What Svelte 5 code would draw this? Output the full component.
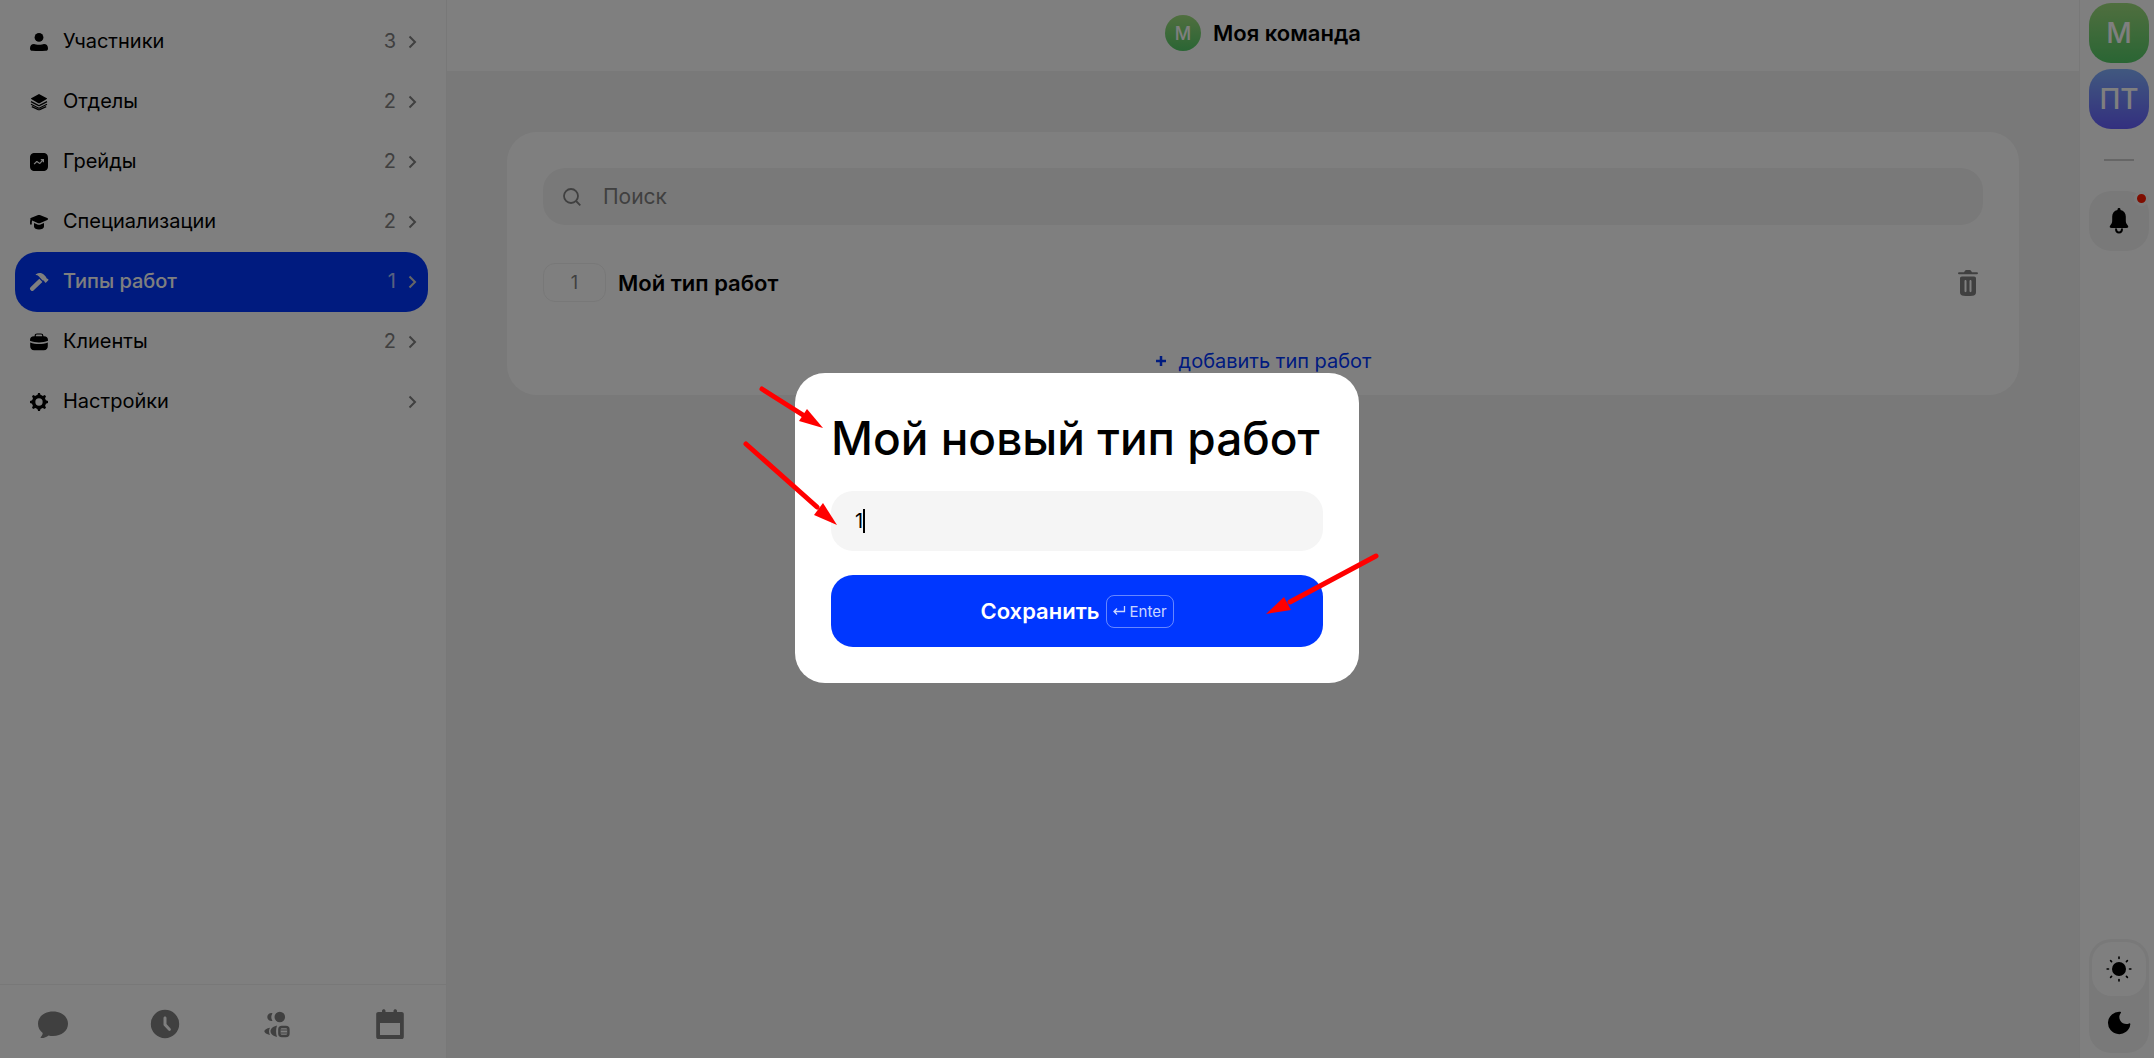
<script>
  const sections = [
    { id: 'people', label: 'Участники', count: 3 },
    { id: 'layers', label: 'Отделы', count: 2 },
    { id: 'grades', label: 'Грейды', count: 2 },
    { id: 'cap', label: 'Специализации', count: 2 },
    { id: 'hammer', label: 'Типы работ', count: 1, active: true },
    { id: 'case', label: 'Клиенты', count: 2 },
    { id: 'gear', label: 'Настройки', count: null }
  ];
  const teeth = [0, 45, 90, 135, 180, 225, 270, 315];

  let query = $state('');
  let workName = $state('Мой новый тип работ');
  let workOrder = $state('1');
  let theme = $state('light');
</script>

{#snippet sectionIcon(id)}
  <svg class="icon" viewBox="0 0 18 18" aria-hidden="true">
    {#if id === 'people'}
      <circle cx="9" cy="4.4" r="4.4" />
      <path d="M0 15.2c0-2.7 1.6-4.2 4-4.2.8 0 1.2.3 2 .5 2 .4 4 .4 6 0 .8-.2 1.200-.5 2-.5 2.400 0 4 1.500 4 4.200 0 1.800-.8 2.500-2.500 2.600-4.300.3-8.700.3-13 0C.8 17.700 0 17 0 15.200z" />
    {:else if id === 'layers'}
      <path d="M9 1l7.800 4.200c.4.2.4.6 0 .8L9.600 10.200c-.4.200-.8.200-1.200 0L1.200 6c-.4-.2-.4-.6 0-.8z" />
      <path class="line" d="M1 8.600l7.300 3.800c.5.2.9.2 1.400 0L17 8.600M1 11.200l7.300 3.800c.5.2.9.2 1.400 0l7.300-3.800M1.800 13.600l6.500 3c.5.200.9.200 1.400 0l6.500-3" />
    {:else if id === 'grades'}
      <path fill-rule="evenodd" d="M5 0h8c3.500 0 5 1.500 5 5v8c0 3.500-1.500 5-5 5H5c-3.500 0-5-1.500-5-5V5c0-3.500 1.500-5 5-5zM10.800 6.100v1.100h1.100l-2.200 2.500-2.100-1.500c-.6-.4-1.200-.3-1.700.2L3.700 10.700l.8.9 2.400-2.400 2.200 1.600c.5.300 1.100.3 1.500-.2l2.200-2.600v1.200H14V6.100z" />
    {:else if id === 'cap'}
      <path d="M7.600 2.200c1-.4 1.800-.4 2.800 0l6.900 2.900c1 .5 1 1.400 0 1.900l-6.900 2.900c-1 .4-1.800.4-2.800 0L2.200 7.600c-.4.900-.5 1.900-.4 3.400 0 .9-1.700.9-1.700 0C0 9 .1 7.500.5 6.300c-.4-.5-.3-.9.2-1.200z" />
      <path d="M4 10l3.400 1.500c1.100.4 2.100.4 3.200 0L14 10v3.600c0 2-2.300 3-5 3s-5-1-5-3z" />
    {:else if id === 'hammer'}
      <path d="M6 1.200C8.600-.4 11.800-.3 14 1.800l2.100 2.100c.3.300.3.700.1 1.100l2 1.300c.4.300.4.700.1 1l-2.200 2.200c-.3.300-.7.300-1 0l-1.400-2c-.5.200-.9.100-1.300-.3L10 4.800C9 3.500 8 2.400 6.100 2.100c-.5-.1-.5-.6-.1-.9z" />
      <path d="M9.300 5.800l3.100 3.100-8.900 8.500c-.8.700-1.800.7-2.500 0l-.6-.6c-.7-.7-.6-1.700.1-2.500z" />
    {:else if id === 'case'}
      <path class="line" d="M5.200 4V2.800C5.200 1.700 6 1 7 1h4c1 0 1.800.7 1.800 1.800V4" />
      <path d="M4 3.200h10c2.600 0 4 1.500 4 4v.6c-5.500 2.200-12.500 2.200-18 0v-.6c0-2.500 1.400-4 4-4z" />
      <path d="M.2 9.500c5.500 2 12.100 2 17.600 0V13c0 2.600-1.300 4.200-4 4.200H4.200c-2.700 0-4-1.600-4-4.200z" />
    {:else}
      <circle class="ring" cx="9" cy="9" r="5.400" />
      {#each teeth as angle}
        <path d="M6.800 3.600L8.100 0h1.800l1.300 3.600z" transform="rotate({angle} 9 9)" />
      {/each}
    {/if}
  </svg>
{/snippet}

<div class="page">
  <aside class="sidebar">
    <nav class="sections" aria-label="Разделы">
      {#each sections as s}
        <a class="section" class:active={s.active} href="#{s.id}">
          {@render sectionIcon(s.id)}
          <span class="label">{s.label}</span>
          {#if s.count !== null}<span class="count">{s.count}</span>{/if}
          <svg class="chevron" viewBox="0 0 8 14" aria-hidden="true"><path d="M1.500 1.500L7 7l-5.500 5.500" /></svg>
        </a>
      {/each}
    </nav>
    <nav class="tabs" aria-label="Навигация">
      <button type="button" aria-label="Чаты">
        <svg viewBox="0 0 36 36"><path d="M18 5.500c8.600 0 15 5.200 15 12.200s-6.400 12.300-15 12.300c-1.600 0-3.100-.2-4.500-.6-1.700 1.500-4.500 2.700-7.400 2.600-.7 0-.8-.7-.3-1.100 1.300-1.200 1.900-2.700 1.900-4C4.700 24.700 3 21.500 3 17.700 3 10.700 9.400 5.500 18 5.500z" /></svg>
      </button>
      <button type="button" aria-label="Время">
        <svg viewBox="0 0 36 36"><path fill-rule="evenodd" d="M18 3.800a14.200 14.200 0 1 1 0 28.400 14.200 14.200 0 0 1 0-28.400zM18 10.500c-.9 0-1.500.6-1.500 1.500v6.500c0 .5.200.9.500 1.200l4.500 4.800c1.300 1.300 3.200-.5 2-1.900L19.500 18v-6c0-.9-.6-1.500-1.500-1.500z" /></svg>
      </button>
      <button type="button" aria-label="Команда">
        <svg viewBox="0 0 36 36">
          <path d="M12.500 7.200a4 4 0 1 0 0 7.600 7 7 0 0 1 0-7.600z" />
          <circle cx="19.800" cy="11" r="5.300" />
          <path d="M10 21.800c-3.300.6-5.700 2-5.700 3.500s2.400 3 5.700 3.600c-1.300-2-1.300-5 0-7.100z" />
          <path d="M17 19.500c-4 1-6.500 3.200-6.500 5.700s2.500 4.800 6.500 5.800c-1.200-3-1.200-8.500 0-11.500z" />
          <rect class="badge-box" x="19.400" y="21" width="9" height="9" rx="2.500" />
          <path class="badge-line" d="M20.500 24h6.500M20.500 27h6.500" />
        </svg>
      </button>
      <button type="button" aria-label="Календарь">
        <svg viewBox="0 0 36 36"><path fill-rule="evenodd" d="M6.500 6H10V4.800c0-2.200 3.500-2.200 3.500 0V6h8V4.800c0-2.200 3.500-2.200 3.500 0V6h4.500c1.500 0 2.300.8 2.300 2.300v22.400c0 1.500-.8 2.300-2.300 2.300h-23c-1.500 0-2.300-.8-2.300-2.300V8.300C4.200 6.800 5 6 6.500 6zM8 17v12h20V17z" /></svg>
      </button>
    </nav>
  </aside>

  <main class="main">
    <header class="top">
      <span class="team-dot">М</span>
      <h1>Моя команда</h1>
    </header>
    <section class="card">
      <label class="search">
        <svg viewBox="0 0 18 18" aria-hidden="true"><circle cx="8" cy="8" r="7" /><path d="M13 13l4.300 4.300" /></svg>
        <input type="search" placeholder="Поиск" aria-label="Поиск" bind:value={query} />
      </label>
      <div class="work">
        <span class="order">1</span>
        <span class="name">Мой тип работ</span>
        <button class="trash" type="button" aria-label="Удалить">
          <svg viewBox="0 0 20 26"><path fill-rule="evenodd" d="M1 2.200h5L7 .7C7.300.3 7.600 0 8.200 0h3.600c.6 0 .9.300 1.200.7l1 1.500h5c1.300 0 1.300 2 0 2H1c-1.300 0-1.300-2 0-2zM4 6.500h12c1.400 0 2 .7 2 2v13.700c0 2.500-1.300 3.300-3.500 3.500-3 .300-6 .300-9 0-2.200-.2-3.500-1-3.500-3.500V8.500c0-1.300.6-2 2-2zM6.500 11v10c0 1.500 2 1.500 2 0V11c0-1.500-2-1.500-2 0zm5 0v10c0 1.500 2 1.500 2 0V11c0-1.500-2-1.500-2 0z" /></svg>
        </button>
      </div>
      <button class="add" type="button">
        <svg viewBox="0 0 12 12" aria-hidden="true"><path d="M6 1v10M1 6h10" /></svg>
        <span>добавить тип работ</span>
      </button>
    </section>
  </main>

  <aside class="rail">
    <button class="team green" type="button">М</button>
    <button class="team violet" type="button">ПТ</button>
    <hr />
    <button class="bell" type="button" aria-label="Уведомления">
      <svg viewBox="0 0 20 26"><path d="M10 0c.9 0 1.500.6 1.500 1.400v.5c3.300.7 5.300 3 5.300 6.600v3.700c0 2.300.4 3.400 1.800 5 1.300 1.500.7 2.800-1.300 2.800H2.700c-2 0-2.600-1.300-1.300-2.800 1.400-1.600 1.800-2.700 1.800-5V8.500c0-3.600 2-5.900 5.300-6.600v-.5C8.500.6 9.100 0 10 0z" /><path class="clapper" d="M7 20.500c0 2.200 1 4 3 4s3-1.800 3-4" /></svg>
      <span class="dot"></span>
    </button>
    <div class="themes">
      <button type="button" aria-label="Светлая тема" class:on={theme === 'light'} onclick={() => (theme = 'light')}>
        <svg viewBox="0 0 26 26"><circle cx="13" cy="13" r="7" />{#each teeth as angle}<rect x="12.200" y="0.300" width="1.600" height="3" rx=".8" transform="rotate({angle} 13 13)" />{/each}</svg>
      </button>
      <button type="button" aria-label="Тёмная тема" class:on={theme === 'dark'} onclick={() => (theme = 'dark')}>
        <svg viewBox="0 0 26 26"><path d="M14 1.800c.9-.2 1.300.5.800 1.100-1.700 2-2.100 5.200-.4 7.900 1.900 3 5.700 3.900 8.700 2.600.8-.3 1.400.2 1.200 1A11.200 11.200 0 1 1 14 1.800z" /></svg>
      </button>
    </div>
  </aside>
</div>

<div class="overlay">
  <form class="modal" aria-label="Новый тип работ" onsubmit={(e) => e.preventDefault()}>
    <input class="title" aria-label="Название" bind:value={workName} />
    <div class="field">
      <input aria-label="Порядок" bind:value={workOrder} />
      <span class="caret"></span>
    </div>
    <button class="save" type="submit">
      <span>Сохранить</span>
      <kbd>
        <svg viewBox="0 0 12 10" aria-hidden="true"><path d="M11.500 0v5.500H1M4 2.500l-3 3 3 3" /></svg>
        Enter
      </kbd>
    </button>
    <svg class="arrows" viewBox="0 0 564 310" aria-hidden="true">
      <path class="shaft" d="M-33 16L8 42" />
      <path d="M28 55L4 48l8-12z" />
      <path class="shaft" d="M-49 71L22 134" />
      <path d="M42 152l-23-10 9-12z" />
      <path class="shaft" d="M581 183L495 229" />
      <path d="M471 241l18-17 7 13z" />
    </svg>
  </form>
</div>

<style>
  :global(body) {
    margin: 0;
    font-family: Inter, "Noto Sans", sans-serif;
    font-size: 20px;
    color: #000;
  }
  button, input { font: inherit; color: inherit; border: 0; background: none; padding: 0; margin: 0; outline: 0; }
  svg { display: block; overflow: visible; fill: currentColor; }

  .page { display: flex; min-height: 100vh; background: #f3f3f3; }

  .sidebar {
    width: 446px;
    flex: none;
    display: flex;
    flex-direction: column;
    justify-content: space-between;
    background: #fff;
    border-right: 1px solid #f0f0f0;
  }
  .sections { padding: 12px 18px 0 15px; display: flex; flex-direction: column; }
  .section {
    display: flex;
    align-items: center;
    height: 60px;
    padding: 0 12px 0 15px;
    border-radius: 22px;
    color: #000;
    text-decoration: none;
  }
  .icon { width: 18px; height: 18px; margin-right: 15px; }
  .line { fill: none; stroke: currentColor; stroke-width: 1.2; }
  .ring { fill: none; stroke: currentColor; stroke-width: 3.5; }
  .label, .count { padding-bottom: 2px; }
  .label { flex: 1; }
  .count { color: #808080; }
  .chevron { width: 8px; height: 14px; margin-left: 12px; fill: none; stroke: #808080; stroke-width: 2; }
  .active { background: #0037ff; color: #fff; font-weight: 500; }
  .active .count { color: rgba(255, 255, 255, 0.7); font-weight: 400; }
  .active .chevron { stroke: #ccc; }

  .tabs {
    display: flex;
    justify-content: space-between;
    padding: 21px 38px 16px 35px;
    border-top: 1px solid #f0f0f0;
    color: #808080;
  }
  .tabs svg { width: 36px; height: 36px; }
  .badge-box { fill: none; stroke: currentColor; stroke-width: 2.5; }
  .badge-line { fill: none; stroke: currentColor; stroke-width: 1.2; }

  .main { flex: 1; min-width: 0; }
  .top {
    display: flex;
    justify-content: center;
    align-items: center;
    gap: 12px;
    height: 66px;
    padding-bottom: 5px;
    background: #fff;
  }
  h1 { margin: 0; font-size: 22px; font-weight: 600; }
  .team-dot {
    display: grid;
    place-items: center;
    width: 36px;
    height: 36px;
    border-radius: 50%;
    color: #fff;
    font-size: 18px;
    font-weight: 500;
    background: linear-gradient(#a0de7e, #54cb68);
  }
  .card {
    margin: 61px 60px 0;
    padding: 36px 36px 18px;
    border-radius: 30px;
    background: #fff;
    display: flex;
    flex-direction: column;
  }
  .search { display: flex; align-items: center; gap: 22px; height: 57px; padding: 0 20px; border-radius: 22px; background: #f3f3f3; }
  .search svg { width: 18px; height: 18px; fill: none; stroke: #808080; stroke-width: 1.800; }
  .search input { flex: 1; appearance: none; font-size: 21px; }
  .search input::placeholder { color: #808080; opacity: 1; }
  .work { display: flex; align-items: center; gap: 12px; margin-top: 38px; }
  .order {
    width: 61px;
    height: 37px;
    display: grid;
    place-items: center;
    border: 1px solid #f0f0f0;
    border-radius: 12px;
    color: #808080;
    font-size: 18px;
  }
  .name { flex: 1; font-size: 22px; font-weight: 600; }
  .trash { color: #808080; margin-right: 5px; }
  .trash svg { width: 20px; height: 26px; }
  .add { align-self: center; display: flex; align-items: center; gap: 12px; margin-top: 42px; height: 33px; color: #0037ff; }
  .add svg { width: 12px; height: 12px; stroke: currentColor; stroke-width: 2.500; }

  .rail {
    flex: none;
    width: 60px;
    display: flex;
    flex-direction: column;
    align-items: center;
    padding: 3px 5px 5px 9px;
    background: #fff;
    border-left: 1px solid #f0f0f0;
  }
  .team { width: 60px; height: 60px; margin-bottom: 6px; border-radius: 22px; color: #fff; font-size: 28px; font-weight: 500; }
  .green { background: linear-gradient(#a0de7e, #54cb68); }
  .violet { background: linear-gradient(#82b1ff, #665fff); }
  hr { width: 30px; height: 2px; margin: 24px 0 30px; border: 0; background: #ccc; }
  .bell { position: relative; width: 60px; height: 60px; border-radius: 22px; background: #f3f3f3; display: grid; place-items: center; }
  .bell svg { width: 20px; height: 26px; }
  .clapper { fill: none; stroke: currentColor; stroke-width: 2; }
  .dot { position: absolute; top: 0; right: 0; width: 9px; height: 9px; border: 3px solid #fafafa; border-radius: 50%; background: #ff1a00; }
  .themes { margin-top: auto; padding: 3px; border-radius: 22px; background: #f3f3f3; display: flex; flex-direction: column; }
  .themes button { width: 54px; height: 54px; display: grid; place-items: center; border-radius: 20px; }
  .themes .on { background: #fff; }
  .themes svg { width: 26px; height: 26px; }

  .overlay { position: fixed; inset: 0; padding-bottom: 2px; display: grid; place-items: center; background: rgba(0, 0, 0, 0.5); }
  .modal {
    position: relative;
    box-sizing: border-box;
    width: 564px;
    max-width: 90vw;
    padding: 36px;
    border-radius: 30px;
    background: #fff;
    display: flex;
    flex-direction: column;
    gap: 24px;
  }
  .title { width: 100%; height: 58px; font-size: 46px; font-weight: 500; }
  .field { position: relative; display: flex; height: 60px; padding: 0 24px; border-radius: 22px; background: #f5f5f5; }
  .field input { flex: 1; min-width: 0; }
  .caret { position: absolute; left: 32px; top: 18px; width: 2px; height: 24px; background: #000; }
  .save {
    display: flex;
    justify-content: center;
    align-items: center;
    gap: 6px;
    height: 72px;
    border-radius: 22px;
    background: #0037ff;
    color: #fff;
    font-size: 22px;
    font-weight: 600;
  }
  kbd {
    display: flex;
    align-items: center;
    gap: 5px;
    height: 31px;
    padding: 0 6px;
    border: 1px solid rgba(255, 255, 255, 0.4);
    border-radius: 8px;
    color: rgba(255, 255, 255, 0.8);
    font-family: inherit;
    font-size: 15px;
    font-weight: 400;
  }
  kbd svg { width: 12px; height: 10px; fill: none; stroke: currentColor; stroke-width: 1.300; }
  .arrows { position: absolute; left: 0; top: 0; width: 564px; height: 310px; fill: #f00; pointer-events: none; }
  .shaft { fill: none; stroke: #f00; stroke-width: 5; stroke-linecap: round; }
</style>
